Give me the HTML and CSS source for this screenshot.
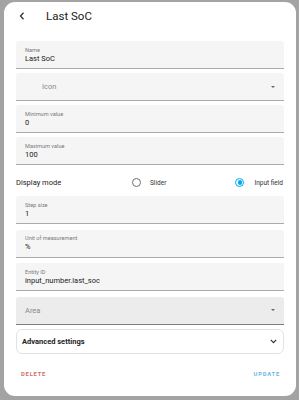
FILE: index.html
```html
<!DOCTYPE html>
<html lang="en">
<head>
  <meta charset="UTF-8" />
  <title>Last SoC</title>
  <link rel="stylesheet" href="styles.css">
</head>
<body>

  <div class="dialog">
    <!-- CABEÇALHO -->
    <div class="header">
      <svg class="back" width="6" height="8" viewBox="0 0 6 8">
        <path d="M4.5 0.8 L1.5 4 L4.5 7.2" fill="none" stroke="#333" stroke-width="1.3"/>
      </svg>
      <div class="titulo">Last SoC</div>
    </div>

    <!-- CAMPOS -->
    <div class="form grupo1">
      <div class="campo">
        <span class="rotulo">Name</span>
        <span class="valor">Last SoC</span>
      </div>
      <div class="campo campo-select">
        <span class="placeholder icone">Icon</span>
        <span class="seta"></span>
      </div>
      <div class="campo">
        <span class="rotulo">Minimum value</span>
        <span class="valor">0</span>
      </div>
      <div class="campo">
        <span class="rotulo">Maximum value</span>
        <span class="valor">100</span>
      </div>
    </div>

    <div class="modo">
      <span class="modo-label">Display mode</span>
      <label class="opcao opcao-slider"><span class="radio"></span>Slider</label>
      <label class="opcao opcao-input"><span class="radio marcado"></span>Input field</label>
    </div>

    <div class="form grupo2">
      <div class="campo">
        <span class="rotulo">Step size</span>
        <span class="valor">1</span>
      </div>
      <div class="campo">
        <span class="rotulo">Unit of measurement</span>
        <span class="valor">%</span>
      </div>
      <div class="campo">
        <span class="rotulo">Entity ID</span>
        <span class="valor">input_number.last_soc</span>
      </div>
      <div class="campo campo-select campo-area">
        <span class="placeholder">Area</span>
        <span class="seta"></span>
      </div>
    </div>

    <div class="avancado">
      <span>Advanced settings</span>
      <svg width="7" height="5" viewBox="0 0 7 5">
        <path d="M0.8 0.8 L3.5 3.6 L6.2 0.8" fill="none" stroke="#333" stroke-width="1.2"/>
      </svg>
    </div>

    <!-- AÇÕES -->
    <div class="acoes">
      <a class="btn btn-delete">Delete</a>
      <a class="btn btn-update">Update</a>
    </div>
  </div>

</body>
</html>
```

FILE: styles.css
```css
body {
  margin: 0;
  padding: 0;
  font-family: Roboto, 'Noto Sans', sans-serif;
  background: #a3a3a3;
  height: 400px;
  overflow: hidden;
}

.dialog {
  margin: 2px 0 0 4px;
  width: 292px;
  height: 394px;
  background: #fff;
  border-radius: 11px;
  box-sizing: border-box;
  padding: 0 12px;
  display: flex;
  flex-direction: column;
  color: #212121;
}

/* CABEÇALHO */
.header {
  height: 28px;
  display: flex;
  align-items: center;
}

.back {
  margin-left: 3px;
}

.titulo {
  margin-left: 21px;
  font-size: 11.5px;
  color: #212121;
}

/* CAMPOS */
.form {
  display: flex;
  flex-direction: column;
}

.grupo1 {
  margin-top: 11px;
  gap: 4px;
}

.grupo2 {
  gap: 5.5px;
}

.campo {
  height: 28px;
  box-sizing: border-box;
  background: #f5f5f5;
  border-bottom: 1px solid #ababab;
  border-radius: 3px 3px 0 0;
  padding: 0 9px;
  display: flex;
  flex-direction: column;
  justify-content: center;
}

.rotulo {
  font-size: 5.6px;
  color: #7a7a7a;
  line-height: 8px;
}

.valor {
  font-size: 7.5px;
  line-height: 10px;
  color: #212121;
}

.campo-select {
  flex-direction: row;
  align-items: center;
  justify-content: space-between;
}

.placeholder {
  font-size: 7.5px;
  color: #8a8a8a;
}

.icone {
  margin-left: 17px;
}

.campo-area {
  background: #ececec;
  border-bottom-color: #7d7d7d;
}

.seta {
  width: 0;
  height: 0;
  border-left: 2.5px solid transparent;
  border-right: 2.5px solid transparent;
  border-top: 2.5px solid #666;
}

/* MODO DE EXIBIÇÃO */
.modo {
  height: 31px;
  box-sizing: border-box;
  display: flex;
  align-items: center;
  padding-top: 4px;
  font-size: 7.5px;
}

.modo-label {
  width: 116px;
}

.opcao {
  display: flex;
  align-items: center;
  gap: 9px;
  font-size: 6.5px;
  color: #333;
}

.opcao-input {
  margin-left: auto;
  gap: 10px;
  margin-right: 1px;
}

.radio {
  width: 9px;
  height: 9px;
  box-sizing: border-box;
  border: 1px solid #6f6f6f;
  border-radius: 50%;
  display: flex;
  align-items: center;
  justify-content: center;
}

.radio.marcado {
  border-color: #03a9f4;
}

.radio.marcado::after {
  content: '';
  width: 4.5px;
  height: 4.5px;
  border-radius: 50%;
  background: #03a9f4;
}

/* AVANÇADO */
.avancado {
  margin-top: 4px;
  height: 25px;
  border: 1px solid #e3e3e3;
  border-radius: 6px;
  box-sizing: border-box;
  padding: 0 6px 0 5px;
  display: flex;
  align-items: center;
  justify-content: space-between;
  font-size: 7.5px;
  font-weight: bold;
  color: #212121;
}

/* AÇÕES */
.acoes {
  display: flex;
  justify-content: space-between;
  padding: 0 4px 0 5px;
  margin-top: 17px;
}

.btn {
  font-size: 5.8px;
  font-weight: bold;
  letter-spacing: 0.8px;
  text-transform: uppercase;
}

.btn-delete {
  color: #cf6f6b;
}

.btn-update {
  color: #6fb8e2;
}
```
